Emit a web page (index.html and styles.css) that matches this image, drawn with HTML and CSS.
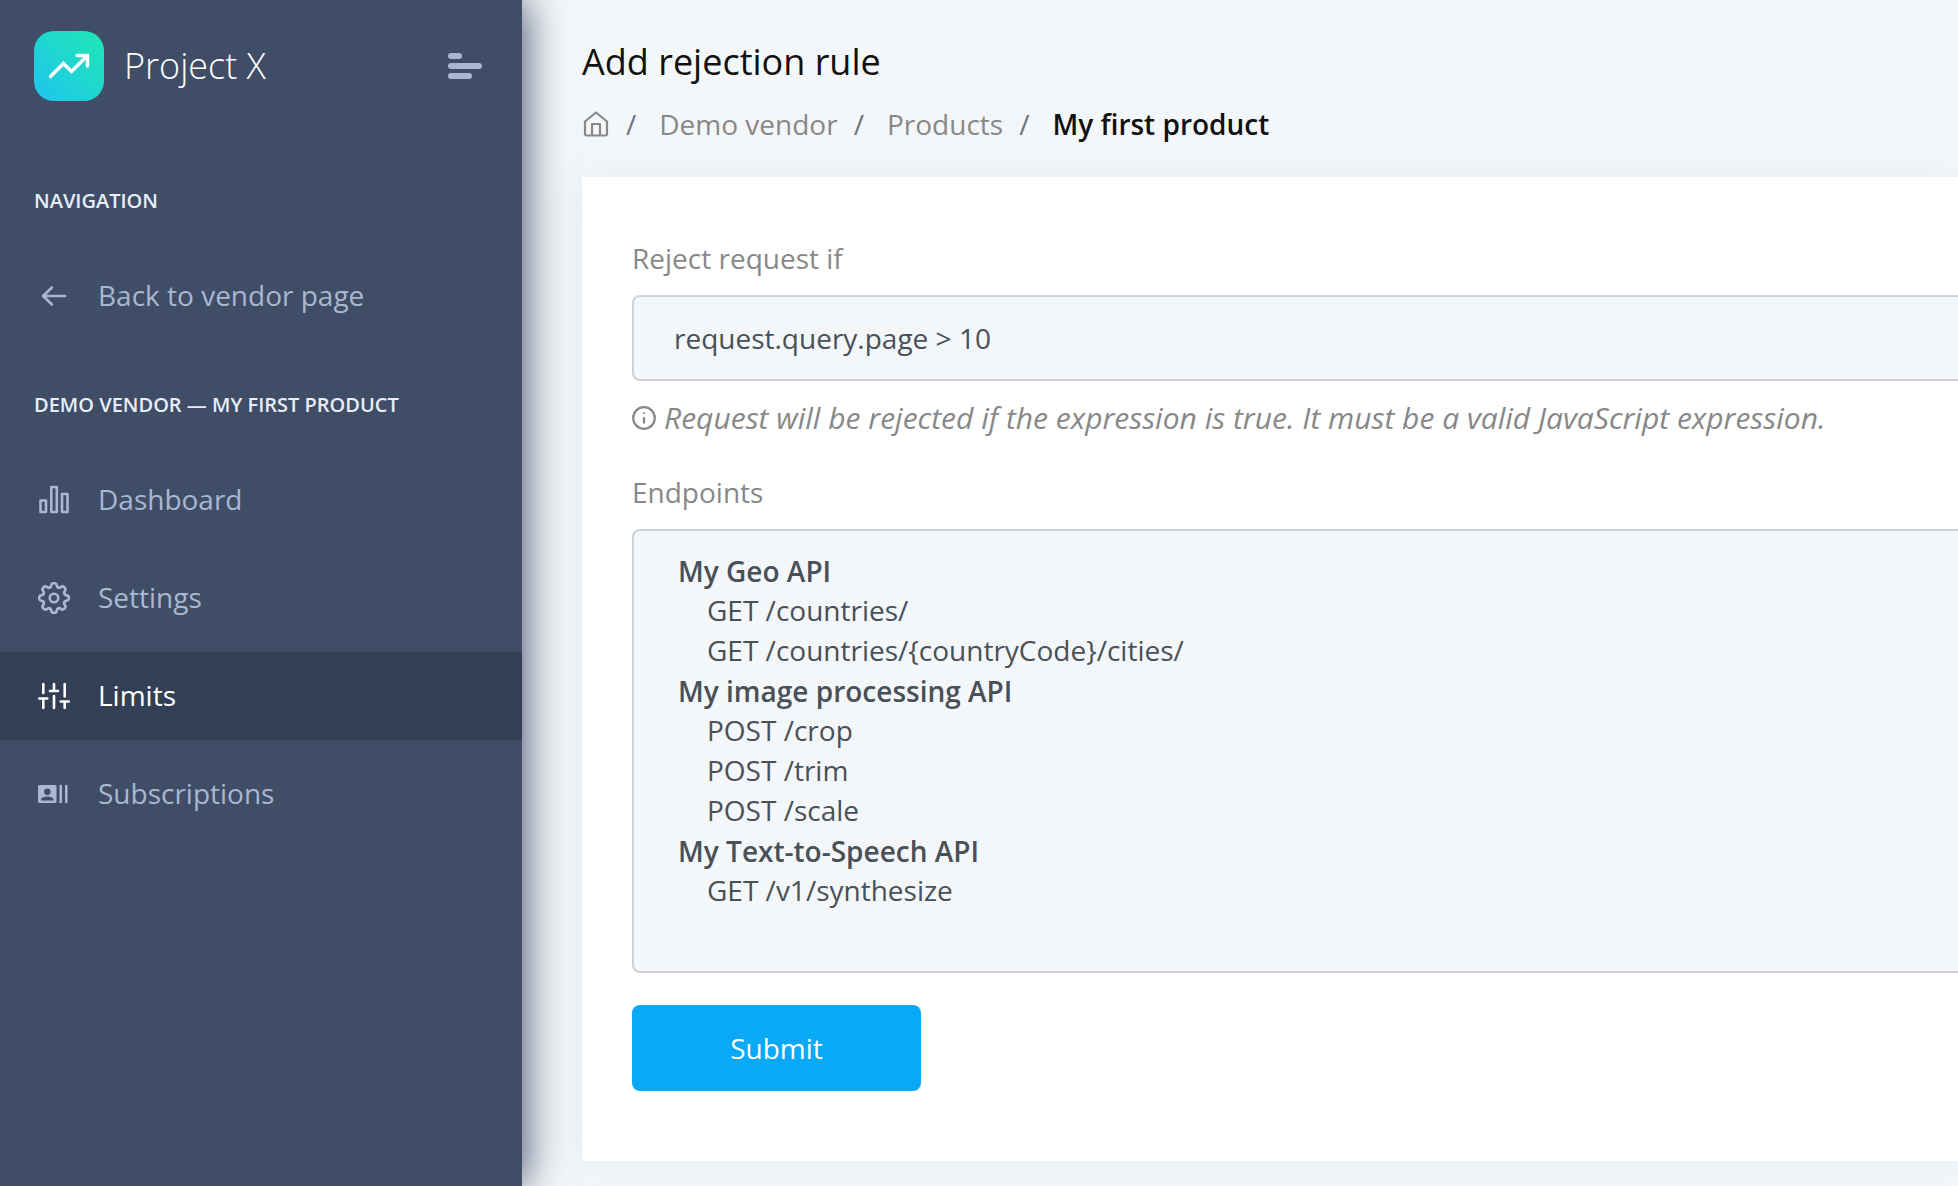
FILE: index.html
```html
<!DOCTYPE html>
<html lang="en">
<head>
<meta charset="utf-8">
<meta name="viewport" content="width=device-width, initial-scale=1">
<title>Add rejection rule – Project X</title>
<link rel="stylesheet" href="styles.css">
</head>
<body>
<div class="app">
  <aside class="sidebar">
    <header class="brand">
      <a class="brand-link" href="#">
        <svg class="logo" viewBox="0 0 70 70" aria-hidden="true">
          <defs>
            <linearGradient id="logo-fill" x1="0" y1="1" x2="1" y2="0">
              <stop offset="0" stop-color="#1fc4ee"/>
              <stop offset="1" stop-color="#1fe8b4"/>
            </linearGradient>
          </defs>
          <rect width="70" height="70" rx="20" fill="url(#logo-fill)"/>
          <path d="M16.500 45.500 29.500 32.500 37.500 40.500 53 25M43 24.500H53.500V35" fill="none" stroke="#fff" stroke-width="3.400" stroke-linecap="round" stroke-linejoin="miter"/>
        </svg>
        <span class="brand-name">Project X</span>
      </a>
      <button class="collapse" type="button" aria-label="Collapse menu">
        <svg width="34" height="26" viewBox="0 0 34 26" fill="currentColor" aria-hidden="true">
          <rect width="14" height="6" rx="3"/><rect y="10" width="34" height="6" rx="3"/><rect y="20" width="24" height="6" rx="3"/>
        </svg>
      </button>
    </header>
    <nav class="nav">
      <h2 class="nav-title">NAVIGATION</h2>
      <ul class="nav-list">
        <li><a class="nav-item" href="#">
          <svg class="icon" viewBox="0 0 32 32" aria-hidden="true"><path d="M27 16H5M14 7.500 5 16l9 8.500"/></svg>
          Back to vendor page</a></li>
      </ul>
      <h2 class="nav-title">DEMO VENDOR — MY FIRST PRODUCT</h2>
      <ul class="nav-list">
        <li><a class="nav-item" href="#">
          <svg class="icon" viewBox="0 0 32 32" aria-hidden="true"><path d="M2.500 16.500H8V28H2.500zM13.300 3h5.500v25h-5.500zM24 10h5.500v18H24z"/></svg>
          Dashboard</a></li>
        <li><a class="nav-item" href="#">
          <svg class="icon" viewBox="0 0 32 32" aria-hidden="true">
            <defs><path id="tooth" d="M-4.400-10.600C-3.400-10.200-3-11-2.900-12.200C-2.700-15.800 2.700-15.800 2.900-12.200C3-11 3.400-10.200 4.400-10.600"/></defs>
            <g transform="translate(16 16)">
              <use href="#tooth"/><use href="#tooth" transform="rotate(45)"/><use href="#tooth" transform="rotate(90)"/><use href="#tooth" transform="rotate(135)"/>
              <use href="#tooth" transform="rotate(180)"/><use href="#tooth" transform="rotate(225)"/><use href="#tooth" transform="rotate(270)"/><use href="#tooth" transform="rotate(315)"/>
              <circle r="4.300"/>
            </g>
          </svg>
          Settings</a></li>
        <li><a class="nav-item active" href="#" aria-current="page">
          <svg class="icon" viewBox="0 0 32 32" aria-hidden="true"><path d="M5.300 28V19M5.300 13V4M16 28V16M16 11V4M26.700 28V21.500M26.700 16.500V4M1.300 18.500h8M12 11h8M22.700 21.500h8"/></svg>
          Limits</a></li>
        <li><a class="nav-item" href="#">
          <svg class="icon icon-solid" viewBox="0 0 32 32" aria-hidden="true"><path fill-rule="evenodd" d="M1.500 7h15.500a1.500 1.500 0 0 1 1.500 1.500v15a1.500 1.500 0 0 1-1.500 1.500H1.500A1.500 1.500 0 0 1 0 23.500v-15A1.500 1.500 0 0 1 1.500 7zM9.300 10.500a3.200 3.200 0 1 0 0 6.400 3.200 3.200 0 0 0 0-6.400zM3 22.500h12.600v-.8c0-2-4-3.200-6.300-3.200S3 19.700 3 21.700z"/><path d="M21.500 7H24v18h-2.500zM27 7h2.500v18H27z"/></svg>
          Subscriptions</a></li>
      </ul>
    </nav>
  </aside>

  <main class="main">
    <h1 class="page-title">Add rejection rule</h1>
    <nav aria-label="Breadcrumb">
      <ol class="crumbs">
        <li><a class="home" href="#" aria-label="Home"><svg width="28" height="28" viewBox="0 0 28 28" aria-hidden="true"><path d="M3 11.500 14 2.500l11 9V23.500a2 2 0 0 1-2 2H5a2 2 0 0 1-2-2zM10 25V14h8v11"/></svg></a></li>
        <li><a href="#">Demo vendor</a></li>
        <li><a href="#">Products</a></li>
        <li aria-current="page">My first product</li>
      </ol>
    </nav>
    <form class="card">
      <label class="label" for="expression">Reject request if</label>
      <input class="field" id="expression" type="text" value="request.query.page &gt; 10" aria-describedby="hint">
      <p class="hint" id="hint">
        <svg width="24" height="24" viewBox="0 0 24 24" aria-hidden="true"><circle cx="12" cy="12" r="10.800"/><path d="M12 11v6.500M12 6.500v1.500"/></svg>
        Request will be rejected if the expression is true. It must be a valid JavaScript expression.
      </p>
      <label class="label" for="endpoints">Endpoints</label>
      <select class="field endpoints" id="endpoints" multiple size="10">
        <optgroup label="My Geo API">
          <option>GET /countries/</option>
          <option>GET /countries/{countryCode}/cities/</option>
        </optgroup>
        <optgroup label="My image processing API">
          <option>POST /crop</option>
          <option>POST /trim</option>
          <option>POST /scale</option>
        </optgroup>
        <optgroup label="My Text-to-Speech API">
          <option>GET /v1/synthesize</option>
        </optgroup>
      </select>
      <button class="submit" type="submit">Submit</button>
    </form>
  </main>
</div>
</body>
</html>
```
FILE: styles.css
```css
*, *::before, *::after { box-sizing: border-box; }

body {
  margin: 0;
  background: #f4f7fa;
  color: #111;
  font: 28px/40px "Open Sans", "Noto Sans", sans-serif;
}

h1, h2, p, ul, ol { margin: 0; padding: 0; font-weight: 400; }
ul, ol { list-style: none; }
a { color: inherit; text-decoration: none; }
button, input, select { font: inherit; }

.app { display: flex; min-height: 100vh; }

/* Sidebar */
.sidebar {
  position: relative;
  z-index: 1;
  flex: 0 0 522px;
  background: #3f4d67;
  color: #a9b7d0;
  box-shadow: 2px 0 40px 0 #3f4d67;
}
.brand {
  display: flex;
  align-items: center;
  justify-content: space-between;
  height: 132px;
  padding: 0 40px 0 34px;
}
.brand-link { display: flex; align-items: center; gap: 20px; }
.logo { width: 70px; height: 70px; }
.brand-name { color: #fff; font-size: 36px; font-weight: 300; }
.collapse {
  display: flex;
  padding: 0;
  border: 0;
  background: none;
  color: inherit;
}
.nav-title {
  padding: 49px 34px 31px;
  color: #e8edf7;
  font-size: 20px;
  font-weight: 600;
  line-height: 40px;
}
.nav-list { display: grid; gap: 10px; }
.nav-list + .nav-title { padding-top: 45px; }
.nav-item {
  display: flex;
  align-items: center;
  gap: 28px;
  height: 88px;
  padding: 0 38px 2px;
}
.nav-item.active { background: #333f54; color: #fff; }
.icon {
  width: 32px;
  height: 32px;
  margin-top: 2px;
  fill: none;
  stroke: currentColor;
  stroke-width: 2.6;
  stroke-linecap: round;
  stroke-linejoin: round;
}
.icon-solid { fill: currentColor; stroke: none; }

/* Content */
.main { flex: 1; min-width: 0; padding: 40px 0 25px 60px; }
.page-title { font-size: 36px; line-height: 44px; }
.crumbs {
  display: flex;
  align-items: center;
  margin: 20px 0 33px;
  color: #888;
}
.crumbs li { display: flex; align-items: center; }
.crumbs li + li::before {
  content: "/";
  margin: 0 23px 0 16px;
  color: #6b7480;
  font-weight: 400;
}
.crumbs [aria-current] { color: #111; font-weight: 600; }
.home svg, .hint svg {
  display: block;
  flex: none;
  fill: none;
  stroke: currentColor;
  stroke-width: 2.2;
  stroke-linejoin: round;
}

.card {
  padding: 61px 0 70px 50px;
  background: #fff;
  box-shadow: 0 2px 40px 0 rgba(69, 90, 100, .08);
}
.label { display: block; margin-bottom: 17px; color: #888; }
.field {
  display: block;
  width: 100%;
  height: 86px;
  padding: 0 40px;
  border: 2px solid #ced2d6;
  border-right: 0;
  border-radius: 8px 0 0 8px;
  outline: 0;
  background: #f4f7fa;
  color: #495057;
}
.hint {
  display: flex;
  align-items: center;
  gap: 8px;
  margin: 17px 0 34px;
  color: #888;
  font-size: 30px;
  font-style: italic;
}
.endpoints {
  height: 444px;
  padding: 20px 40px;
  overflow: hidden;
}
.endpoints optgroup { padding: 1px 2px 0; font-weight: 600; line-height: 40px; }
.endpoints option { min-height: 40px; padding: 0 0 0 31px; font-weight: 400; line-height: 40px; }
.submit {
  display: block;
  width: 289px;
  height: 86px;
  margin-top: 32px;
  border: 0;
  border-radius: 8px;
  background: #0aa9f7;
  color: #fff;
}
```
